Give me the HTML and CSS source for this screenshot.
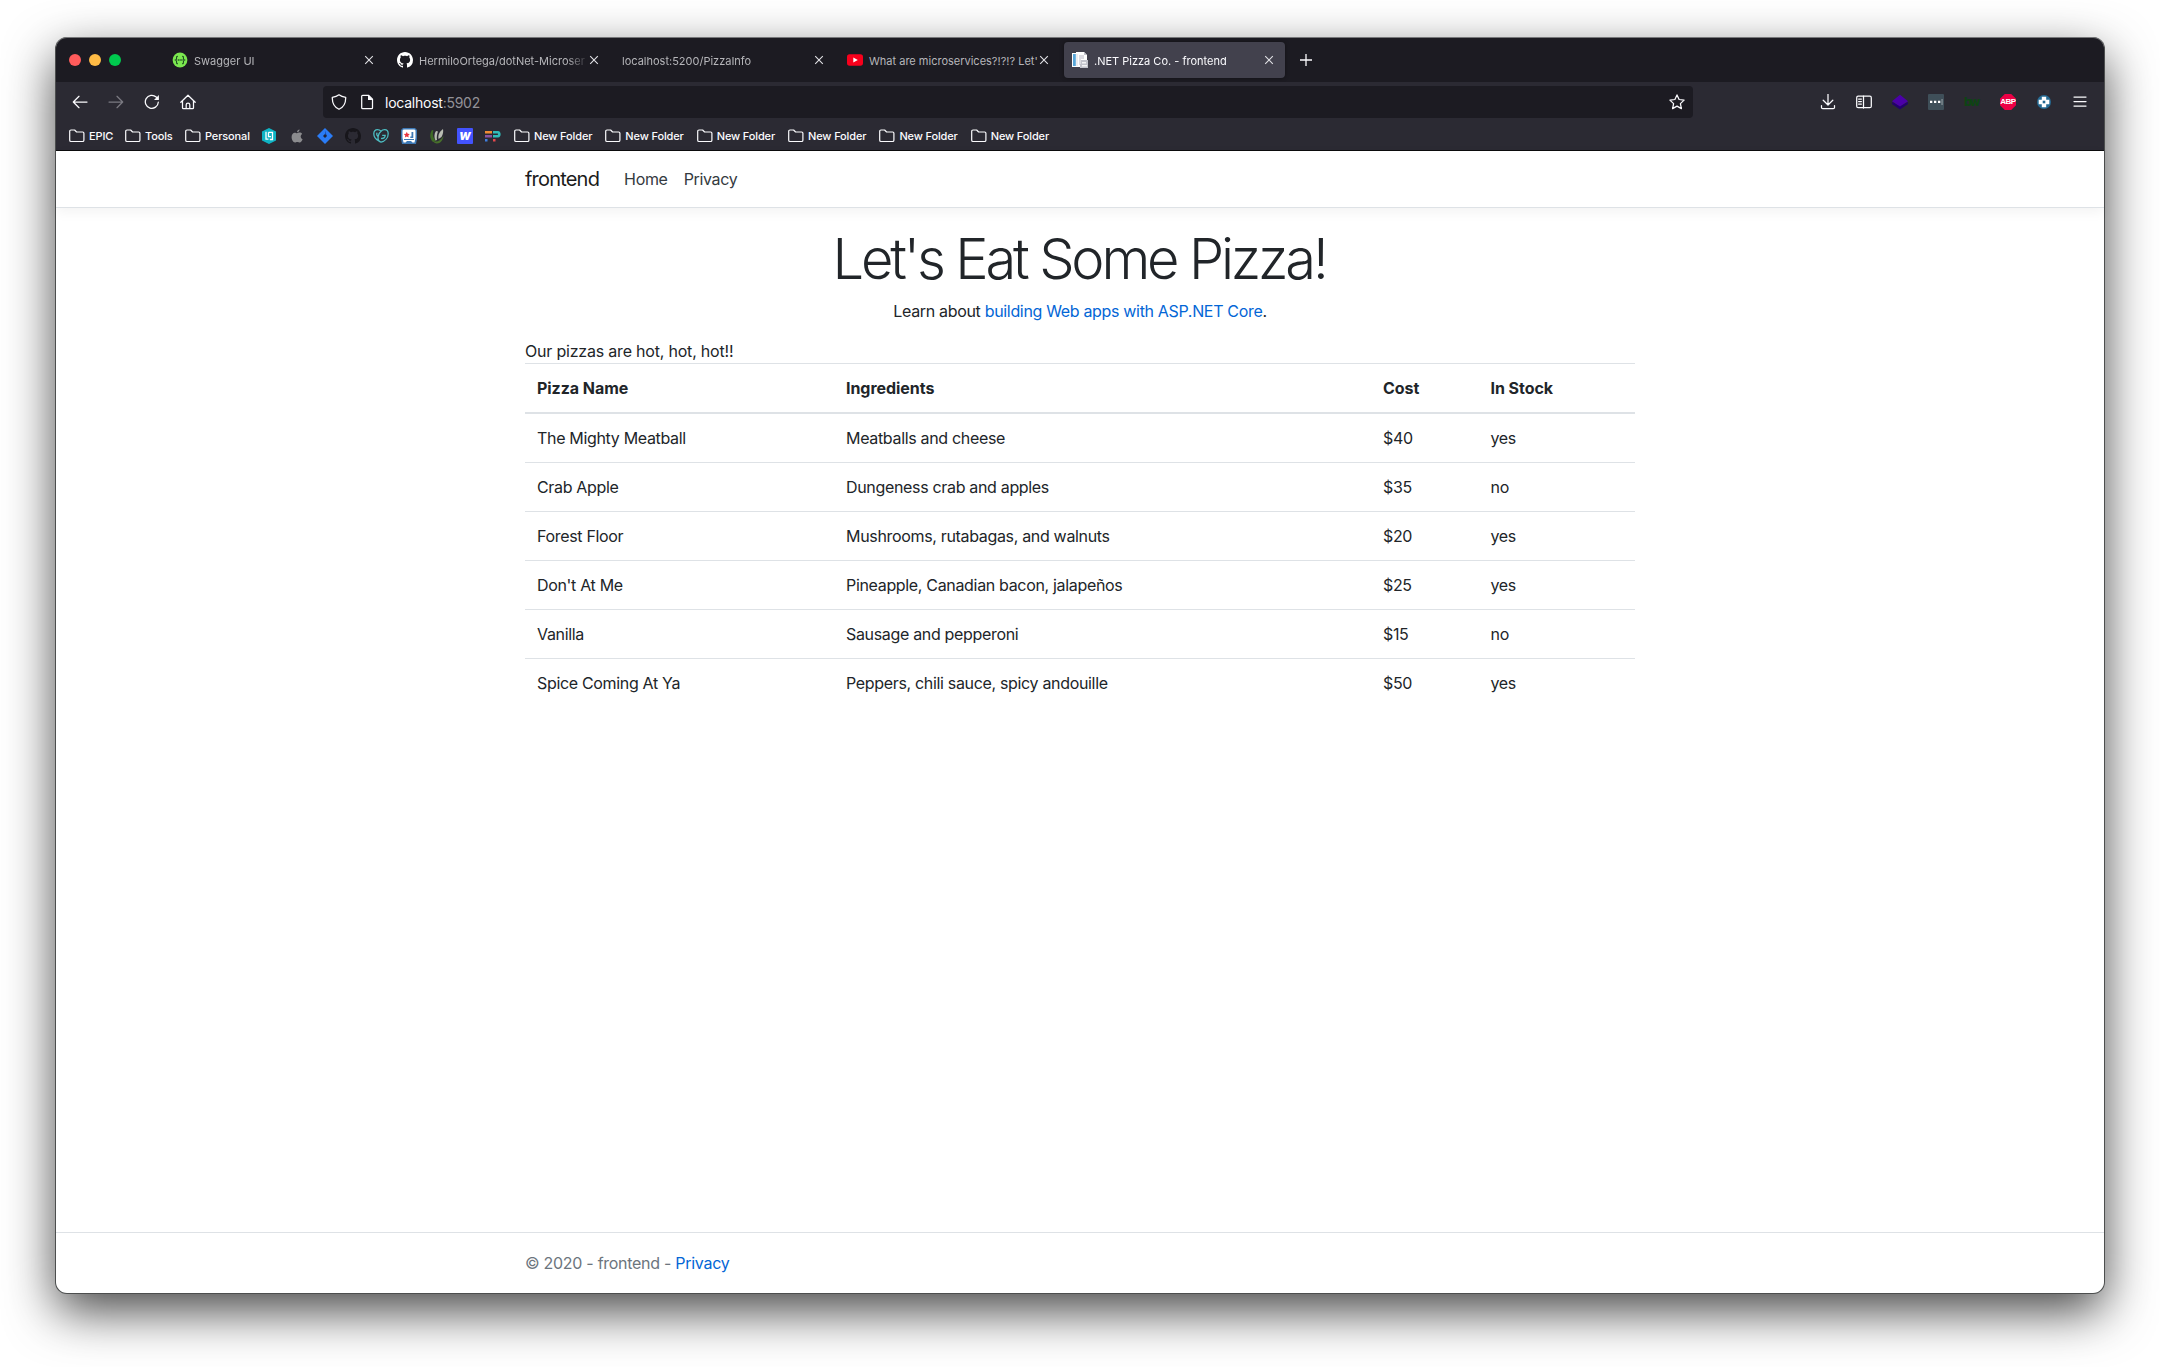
FILE: index.html
```html
<!DOCTYPE html>
<html lang="en">
<head>
<meta charset="utf-8">
<title>.NET Pizza Co. - frontend</title>
<link rel="stylesheet" href="styles.css">
</head>
<body>
<svg class="defs" aria-hidden="true">
  <symbol id="close" viewBox="0 0 10 10"><path d="M1.2 1.2l7.6 7.6M8.8 1.2L1.2 8.8" fill="none" stroke="currentColor" stroke-width="1.1"/></symbol>
  <symbol id="folder" viewBox="0 0 16 16"><path d="M.7 12.2V3.3a1.3 1.3 0 0 1 1.3-1.3h3.6l2 2h6a1.3 1.3 0 0 1 1.3 1.3v6.9a1.3 1.3 0 0 1-1.3 1.3H2a1.3 1.3 0 0 1-1.3-1.3z" fill="none" stroke="currentColor" stroke-width="1.2" stroke-linejoin="round"/></symbol>
  <symbol id="github" viewBox="0 0 16 16"><path fill="currentColor" d="M8 0C3.58 0 0 3.58 0 8c0 3.54 2.29 6.53 5.47 7.59.4.07.55-.17.55-.38 0-.19-.01-.82-.01-1.49-2.01.37-2.53-.49-2.69-.94-.09-.23-.48-.94-.82-1.13-.28-.15-.68-.52-.01-.53.63-.01 1.08.58 1.23.82.72 1.21 1.87.87 2.33.66.07-.52.28-.87.51-1.07-1.78-.2-3.64-.89-3.64-3.95 0-.87.31-1.59.82-2.15-.08-.2-.36-1.02.08-2.12 0 0 .67-.21 2.2.82.64-.18 1.32-.27 2-.27s1.36.09 2 .27c1.53-1.04 2.2-.82 2.2-.82.44 1.1.16 1.92.08 2.12.51.56.82 1.27.82 2.15 0 3.07-1.87 3.75-3.65 3.95.29.25.54.73.54 1.48 0 1.07-.01 1.93-.01 2.2 0 .21.15.46.55.38A8.01 8.01 0 0 0 16 8c0-4.42-3.58-8-8-8z"/></symbol>
</svg>
<div class="window">
  <div class="tabbar">
    <div class="lights"><i class="red"></i><i class="yellow"></i><i class="green"></i></div>
    <div class="tab">
      <svg class="fav" viewBox="0 0 16 16"><circle cx="8" cy="8" r="7.4" fill="#7be84f"/><path d="M5.9 4.2c-1.500 0-1.300.8-1.300 1.800 0 1.200-.2 1.700-1 2 .8.300 1 .800 1 2 0 1-.2 1.800 1.300 1.800M10.100 4.200c1.500 0 1.300.800 1.300 1.800 0 1.200.2 1.700 1 2-.8.300-1 .800-1 2 0 1 .2 1.800-1.300 1.800" fill="none" stroke="#1d4a22" stroke-width="1.100"/><path d="M5.700 8h4.800" stroke="#1d4a22" stroke-width="1.300" stroke-dasharray="1.200 .6"/></svg>
      <span class="title">Swagger UI</span><svg class="x"><use href="#close"/></svg>
    </div>
    <div class="tab">
      <svg class="fav white"><use href="#github"/></svg>
      <span class="title">HermiloOrtega/dotNet-Microser</span><svg class="x"><use href="#close"/></svg>
    </div>
    <div class="tab">
      <span class="title">localhost:5200/PizzaInfo</span><svg class="x"><use href="#close"/></svg>
    </div>
    <div class="tab">
      <svg class="fav" viewBox="0 0 16 16"><rect y="2.300" width="16" height="11.400" rx="2.600" fill="#f8001c"/><path d="M6.300 5.500v5L10.800 8z" fill="#fff"/></svg>
      <span class="title tight">What are microservices?!?!? Let'</span><svg class="x"><use href="#close"/></svg>
    </div>
    <div class="tab active">
      <svg class="fav" viewBox="0 0 16 16"><path fill="#fff" d="M0 1h4V0h8l3 3v5h1v8H8v-1H0z"/><path fill="#58a6d8" d="M1 2h2.800v12H1z"/><path fill="#dcdce2" d="M4.500 2h1v12h-1zM7 3h5v4h-3v6H7z"/><path fill="#c3c4cc" d="M12 0l3 3h-3zM9 8h7v8H8v-4h1z"/><path fill="#f4f4f6" d="M10 10h4v1.500h-4zM10 13h5v1.500h-5z"/></svg>
      <span class="title">.NET Pizza Co. - frontend</span><svg class="x"><use href="#close"/></svg>
    </div>
    <svg class="plus" viewBox="0 0 14 14"><path d="M7 1v12M1 7h12" stroke="currentColor" stroke-width="1.300"/></svg>
  </div>

  <div class="toolbar">
    <div class="nav-icons">
      <svg viewBox="0 0 16 16"><path d="M15 8H1.500M7 2.300L1.300 8 7 13.700"/></svg>
      <svg class="dim" viewBox="0 0 16 16"><path d="M1 8h13.500M9 2.300L14.700 8 9 13.700"/></svg>
      <svg viewBox="0 0 16 16"><path d="M14.300 8.200a6.500 6.500 0 1 1-2.100-5.200l1.600 1.600"/><path class="solid" d="M14.900 1v4.900H10z"/></svg>
      <svg viewBox="0 0 16 16"><path d="M.8 8.300L8 1.200l7.200 7.100M2.500 7v6.700c0 .6.400 1 1 1h9c.6 0 1-.4 1-1V7M6.200 14.500v-3.700c0-2.400 3.600-2.400 3.600 0v3.700"/></svg>
    </div>
    <div class="urlbar">
      <svg class="ic" viewBox="0 0 16 16"><path d="M8 .8c2 1.600 4 2.200 6.700 2.500C14.900 9 13.300 13 8 15.300 2.700 13 1.100 9 1.300 3.300 4 3 6 2.400 8 .8z"/></svg>
      <svg class="ic page-ic" viewBox="0 0 16 16"><path d="M3.700 1.300h5.800L13.500 5.300v8.400c0 .6-.4 1-1 1H3.700c-.6 0-1-.4-1-1V2.300c0-.6.4-1 1-1z"/><path class="solid" d="M9 1v5h4.700z"/></svg>
      <span class="url">localhost<span class="port">:5902</span></span>
      <svg class="ic" viewBox="0 0 16 16"><path d="M8 .9l2.100 4.600 5 .6-3.700 3.500 1 5L8 12.100l-4.400 2.500 1-5L.9 6.100l5-.6z"/></svg>
    </div>
    <div class="ext-icons">
      <svg viewBox="0 0 16 16"><path d="M8 0v10.500M3.200 6.200L8 11l4.800-4.800M1.500 11.500v2c0 .7.500 1.200 1.200 1.200h10.600c.7 0 1.200-.5 1.200-1.200v-2"/></svg>
      <svg viewBox="0 0 16 16"><rect x=".7" y="2.200" width="14.600" height="11.500" rx="1.500"/><path d="M7.500 2v12M2.600 5h2.800M2.600 7.500h2.800M2.600 10h2.800"/></svg>
      <svg class="fill" viewBox="0 0 16 16"><path fill="#23006e" d="M0 8l8 4 8-4v2l-8 5.400L0 10z"/><path fill="#4b00a8" d="M8 .8l8 6.400-8 5.300-8-5.300z"/></svg>
      <svg class="fill" viewBox="0 0 16 16"><rect width="16" height="16" rx="1" fill="#3f4f59"/><path fill="#fff" d="M2 6.800h2.300v2.300H2zM6 6.800h2.300v2.300H6zM10 6.800h2.300v2.300H10z"/><path fill="#7d888f" d="M13.300 5h1.500v6h-1.500z"/></svg>
      <span class="bw">bw</span>
      <span class="abp">ABP</span>
      <svg class="fill" viewBox="0 0 16 16"><circle cx="8" cy="8" r="7" fill="#256a93"/><path fill="#fff" d="M5.800 2.700h4.400v3.100h3.100v4.400h-3.100v3.100H5.800v-3.100H2.700V5.800h3.100z"/><path fill="#256a93" d="M6.700 6.700h2.600v2.600H6.700z"/></svg>
      <svg viewBox="0 0 16 16"><path d="M2 3.100h12M2 7.600h12M2 12.100h12"/></svg>
    </div>
  </div>

  <div class="bookmarks">
    <div class="bm epic"><svg><use href="#folder"/></svg>EPIC</div>
    <div class="bm tools"><svg><use href="#folder"/></svg>Tools</div>
    <div class="bm personal"><svg><use href="#folder"/></svg>Personal</div>
    <div class="sites">
      <svg viewBox="0 0 16 16"><path fill="#0eb3c4" d="M8 0l7 3.500v9L8 16l-7-3.500v-9z"/><path d="M5 3.800v7.400h2.500M7.500 4.300h4v7.200H8.800M7.500 4.300v4.400H10" fill="none" stroke="#fff" stroke-width="1.300"/></svg>
      <svg viewBox="0 0 16 16"><path fill="#8b8b8e" d="M10.600 1.500c0 1.500-1.200 2.800-2.600 2.800 0-1.500 1.200-2.700 2.600-2.800zM8 5.300c.7 0 1.400-.7 2.600-.7 1 0 2 .5 2.600 1.400-2.200 1.300-1.800 4.300.4 5.200-.6 1.600-1.700 3.300-2.900 3.300-.9 0-1.300-.6-2.400-.6s-1.500.6-2.300.6C4.300 14.500 2.600 11.700 2.600 9c0-2.700 1.500-4.300 3.200-4.300 1 0 1.600.6 2.200.6z"/></svg>
      <svg viewBox="0 0 16 16"><path fill="#2a7cf7" d="M8 0l8 8-8 8-8-8z"/><path fill="#1a52b8" d="M8 2.500L10 8H8z"/><path fill="#20243a" d="M8 6L10 8 8 10 6 8z"/></svg>
      <svg class="darkgit"><use href="#github"/></svg>
      <svg viewBox="0 0 16 16"><path d="M5.800 12.800C2.600 11.300.8 8.700.8 5.800.8 3.200 2.300 1.700 4.400 1.700c1.500 0 2.700.6 3.600 1.600M8 3.300c.9-1 2.100-1.600 3.600-1.600 2.100 0 3.600 1.500 3.600 4.100 0 4.100-3.200 7.400-7.200 8.400-2.600-.7-3.300-3.400-2.800-6C5.600 6 6.600 4.400 8 3.300zM5 8.500C3.600 7 3.300 5.500 4.300 4.700M9.200 7.300h3c0 2.300-1.700 3.500-4.200 3.100" fill="none" stroke="#4dbdc2" stroke-width="1.300"/></svg>
      <svg viewBox="0 0 16 16"><path fill="#3d78b5" d="M2 0h12l2 2v9l-1 5H1l-1-5V2z"/><path fill="#fff" d="M2.500 1.500h11l1 1V10l-1 4.500h-2L10 13H6l-1.500 1.500h-2L1.500 10V2.500z"/><path fill="#3d78b5" d="M10.500 4h1.800v6h-3V8.500h1.200zM3 11h10v1H3z"/><path fill="#e8343f" d="M5.800 3.800l.9 1.900 2.100.3-1.500 1.400.4 2.100-1.900-1-1.900 1 .4-2.100L2.800 6l2.100-.3z"/></svg>
      <svg viewBox="0 0 16 16"><path fill="#3f6b26" d="M3 2C.500 6 .500 10.500 4 14l3-1C4 10 3 6 4.500 2.500z"/><path fill="#b9bdb3" d="M7 3c-2 3-2 6.500-.500 9.500l1.500-.5c-.5-3 0-6 1-8.500zM14 1c-4 3-5 6-4.500 10l3-2c1.500-3 2-5 1.500-8z"/><path fill="#486f2c" d="M4 13c4 1.500 7 0 10.500-5-.5 4-3 7.500-6.500 7.500-2 0-3.200-1-4-2.500z"/></svg>
      <span class="w-icon">w</span>
      <svg viewBox="0 0 16 16"><path fill="#f08b34" d="M0 3h7v2.500H0z"/><path fill="#8b52a1" d="M0 7h7v2.500H0z"/><path fill="#2fbcb9" d="M8 3h5c3.500 0 3.500 6.500 0 6.500H8V7h4.500c.8 0 .8-1.500 0-1.500H8z"/><path fill="#3f7fe0" d="M0 11h2.500v2.500H0z"/><path fill="#e5484d" d="M8 11h2.500v2.500H8z"/></svg>
    </div>
    <div class="bm new"><svg><use href="#folder"/></svg>New Folder</div>
    <div class="bm new"><svg><use href="#folder"/></svg>New Folder</div>
    <div class="bm new"><svg><use href="#folder"/></svg>New Folder</div>
    <div class="bm new"><svg><use href="#folder"/></svg>New Folder</div>
    <div class="bm new"><svg><use href="#folder"/></svg>New Folder</div>
    <div class="bm new"><svg><use href="#folder"/></svg>New Folder</div>
  </div>

  <div class="page">
    <header class="site-header">
      <nav class="container navbar">
        <a class="brand">frontend</a><a class="nav-link">Home</a><a class="nav-link">Privacy</a>
      </nav>
    </header>
    <main class="container main">
      <div class="intro">
        <h1>Let's Eat Some Pizza!</h1>
        <p>Learn about <a class="link">building Web apps with ASP.NET Core</a>.</p>
      </div>
      <div class="hot">Our pizzas are hot, hot, hot!!</div>
      <table class="table">
        <colgroup><col class="c-name"><col class="c-ing"><col class="c-cost"><col class="c-stock"></colgroup>
        <thead><tr><th>Pizza Name</th><th>Ingredients</th><th>Cost</th><th>In Stock</th></tr></thead>
        <tbody>
          <tr><td>The Mighty Meatball</td><td>Meatballs and cheese</td><td>$40</td><td>yes</td></tr>
          <tr><td>Crab Apple</td><td>Dungeness crab and apples</td><td>$35</td><td>no</td></tr>
          <tr><td>Forest Floor</td><td>Mushrooms, rutabagas, and walnuts</td><td>$20</td><td>yes</td></tr>
          <tr><td>Don't At Me</td><td>Pineapple, Canadian bacon, jalapeños</td><td>$25</td><td>yes</td></tr>
          <tr><td>Vanilla</td><td>Sausage and pepperoni</td><td>$15</td><td>no</td></tr>
          <tr><td>Spice Coming At Ya</td><td>Peppers, chili sauce, spicy andouille</td><td>$50</td><td>yes</td></tr>
        </tbody>
      </table>
    </main>
    <footer class="site-footer">
      <div class="container">© 2020 - frontend - <a class="link">Privacy</a></div>
    </footer>
  </div>
</div>
</body>
</html>
```
FILE: styles.css
```css
*, *::before, *::after { box-sizing: border-box; }
body {
  margin: 0;
  height: 1367px;
  padding: 38px 56px 74px;
  background: #fff;
  font-family: Inter, "Liberation Sans", sans-serif;
  overflow: hidden;
}
svg { display: block; flex: none; }
.defs { position: absolute; width: 0; height: 0; }

.window {
  height: 1255px;
  display: flex;
  flex-direction: column;
  border-radius: 11px;
  background: #fff;
  box-shadow: 0 0 0 1px #4c4e4e, 0 18px 50px rgba(0, 0, 0, .73);
}

/* tab strip */
.tabbar {
  height: 44px;
  flex: none;
  display: flex;
  align-items: center;
  padding: 0 0 0 13px;
  background: #1c1b22;
  border-radius: 11px 11px 0 0;
  box-shadow: 0 -1px 0 #77787a;
  color: #fbfbfe;
}
.lights { display: flex; gap: 8px; width: 95px; }
.lights i { width: 12px; height: 12px; border-radius: 50%; }
.red { background: #ff5b5b; }
.yellow { background: #ffbb45; }
.green { background: #00ca4e; }
.tab {
  width: 221px;
  height: 36px;
  margin-right: 4px;
  padding: 0 11px 0 8px;
  display: flex;
  align-items: center;
  border-radius: 4px;
  font-size: 11px;
  color: #b6b6ba;
}
.tab.active { background: #42414d; color: #fbfbfe; box-shadow: 0 0 4px rgba(0, 0, 0, .4); }
.fav { width: 16px; height: 16px; margin-right: 6px; }
.fav.white { color: #fff; }
.title {
  flex: 1;
  min-width: 0;
  padding-top: 2px;
  white-space: nowrap;
  mask-image: linear-gradient(to left, transparent 0, #000 22px);
}
.title.tight { mask-image: none; }
.x { width: 10px; height: 10px; color: #e2e2e6; }
.plus { width: 14px; height: 14px; margin-left: 10px; }

/* navigation toolbar */
.toolbar {
  height: 40px;
  flex: none;
  display: flex;
  align-items: center;
  padding: 0 16px 0 15.5px;
  background: #2b2a33;
  color: #fbfbfe;
}
.toolbar svg { width: 16px; height: 16px; fill: none; stroke: currentColor; stroke-width: 1.25; stroke-linejoin: round; stroke-linecap: round; }
.toolbar .fill { stroke: none; }
.toolbar .solid { fill: currentColor; stroke: none; }
.nav-icons { display: flex; gap: 20px; width: 251.5px; }
.nav-icons .dim { color: #7b7a82; }
.urlbar {
  width: 1370px;
  height: 32px;
  display: flex;
  align-items: center;
  gap: 12px;
  padding: 0 8px;
  border-radius: 4px;
  background: #1c1b22;
}
.url { flex: 1; font-size: 14px; letter-spacing: -.0175em; margin-left: -2px; }
.port { color: #929197; }
.ext-icons { margin-left: auto; display: flex; gap: 20px; align-items: center; }
.bw {
  width: 16px;
  height: 16px;
  font: 800 12px/16px Inter, sans-serif;
  letter-spacing: -.14em;
  color: #0e4413;
}
.abp {
  width: 16px;
  height: 16px;
  font: 700 8px/16px "Liberation Sans", sans-serif;
  letter-spacing: -.06em;
  text-align: center;
  color: #fff;
  background: #ed0045;
  clip-path: polygon(30% 0, 70% 0, 100% 30%, 100% 70%, 70% 100%, 30% 100%, 0 70%, 0 30%);
}

/* bookmarks row */
.bookmarks {
  height: 29px;
  flex: none;
  display: flex;
  align-items: center;
  padding: 0 0 0 13px;
  background: #2b2a33;
  border-bottom: 1px solid #0c0c0d;
  color: #fbfbfe;
  font-size: 11px;
  font-weight: 500;
  letter-spacing: -.012em;
}
.bm { display: flex; align-items: center; gap: 4px; white-space: nowrap; }
.bm svg { width: 16px; height: 16px; }
.epic { width: 56px; }
.tools { width: 60px; }
.personal { width: 76px; }
.new { width: 91.35px; }
.sites { display: flex; gap: 12px; width: 253px; }
.sites svg { width: 16px; height: 16px; }
.darkgit { color: #17161b; }
.w-icon {
  width: 16px;
  height: 16px;
  border-radius: 1px;
  background: #4353ff;
  font: italic 800 13px/14px Inter, sans-serif;
  text-align: center;
  color: #fff;
}

/* page */
.page {
  flex: 1;
  display: flex;
  flex-direction: column;
  border-radius: 0 0 11px 11px;
  font-size: 16px;
  line-height: 24px;
  letter-spacing: -.0205em;
  color: #212529;
}
.container { width: 1110px; margin: 0 auto; }
.site-header { height: 57px; border-bottom: 1px solid #dee2e6; box-shadow: 0 4px 12px rgba(0, 0, 0, .05); }
.navbar { height: 56px; display: flex; align-items: center; }
.brand { font-size: 20px; letter-spacing: -.04em; margin-right: 17px; color: #1b1b1b; }
.nav-link { padding: 0 8px; color: #343a40; }
.main { flex: 1; padding-top: 18px; }
.intro { text-align: center; }
h1 { margin: 0 0 6px; padding-right: 2px; font-size: 56px; font-weight: 340; line-height: 67.2px; letter-spacing: -.0565em; }
p { margin: 0 0 16px; }
.hot { letter-spacing: -.0125em; }
.link { color: #0366d6; }
.table { width: 100%; table-layout: fixed; border-collapse: collapse; }
.c-name { width: 309px; }
.c-ing { width: 537px; }
.c-cost { width: 107.500px; }
.table th, .table td { padding: 12px; text-align: left; border-top: 1px solid #dee2e6; }
.table th { border-bottom: 2px solid #dee2e6; letter-spacing: -.003em; }
.site-footer { height: 61px; line-height: 60px; border-top: 1px solid #dee2e6; color: #6c757d; letter-spacing: -.0175em; }
```
